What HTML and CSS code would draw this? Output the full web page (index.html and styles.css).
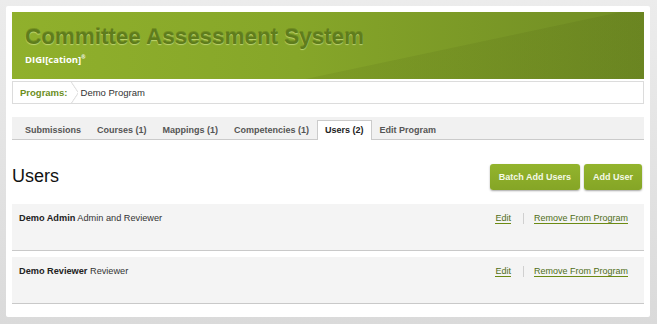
FILE: index.html
```html
<!DOCTYPE html>
<html lang="en">

<head>
    <meta charset="UTF-8">
    <meta name="viewport" content="width=device-width, initial-scale=1.0">
    <title>Committee Assessment System</title>
    <link rel="stylesheet" href="styles.css">
</head>

<body>
    <div class="panel">
        <div class="banner">
            <h1>Committee Assessment System</h1>
            <div class="brand">DIGI[cation]<sup>®</sup></div>
        </div>
        <div class="crumbs">
            <span class="crumbLabel">Programs:</span>
            <span class="crumbItem">Demo Program</span>
        </div>
        <ul class="tabs">
            <li>Submissions</li>
            <li>Courses (1)</li>
            <li>Mappings (1)</li>
            <li>Competencies (1)</li>
            <li class="active">Users (2)</li>
            <li>Edit Program</li>
        </ul>
        <div class="toolbar">
            <h2>Users</h2>
            <div class="buttons">
                <button>Batch Add Users</button>
                <button>Add User</button>
            </div>
        </div>
        <div class="userRow">
            <div><b>Demo Admin</b> Admin and Reviewer</div>
            <div class="actions">
                <a href="#">Edit</a>
                <span class="sep"></span>
                <a href="#">Remove From Program</a>
            </div>
        </div>
        <div class="userRow">
            <div><b>Demo Reviewer</b> Reviewer</div>
            <div class="actions">
                <a href="#">Edit</a>
                <span class="sep"></span>
                <a href="#">Remove From Program</a>
            </div>
        </div>
    </div>
</body>

</html>
```

FILE: styles.css
```css
body {
    margin: 0;
    background: linear-gradient(#ececec, #dadada);
    font-family: "Liberation Sans", Arial, sans-serif;
    height: 324px;
    overflow: hidden;
}

.panel {
    margin: 6px;
    width: 644px;
    height: 311px;
    padding: 6px;
    box-sizing: border-box;
    background-color: white;
    border-radius: 2px;
}

.banner {
    height: 67px;
    padding: 12px 0 0 13px;
    box-sizing: border-box;
    background:
        linear-gradient(168deg, rgba(0, 0, 0, 0) 64%, rgba(40, 50, 0, 0.08) 64.5%),
        linear-gradient(90deg, #90b02c, #86a629 45%, #708c24);
}

h1 {
    margin: 0;
    font-size: 22.4px;
    font-weight: bold;
    color: #5f7d1c;
    text-shadow: 0 1px 1px rgba(230, 245, 170, 0.55), 0 -1px 0 rgba(60, 80, 10, 0.3);
}

.brand {
    margin-top: 3px;
    font-family: "Open Sans", "Liberation Sans", sans-serif;
    font-size: 9.5px;
    font-weight: bold;
    color: white;
}

.brand sup {
    font-size: 5px;
}

.crumbs {
    margin-top: 2px;
    height: 23px;
    border: 1px solid #dcdcdc;
    box-sizing: border-box;
    display: flex;
    align-items: center;
    font-size: 9.5px;
}

.crumbLabel {
    position: relative;
    height: 100%;
    display: flex;
    align-items: center;
    padding: 0 12px 0 7px;
    font-weight: bold;
    color: #6b8e1c;
}

.crumbLabel::after {
    content: "";
    position: absolute;
    right: 2px;
    top: 0;
    height: 21px;
    width: 7px;
    background: linear-gradient(to top right, transparent 45%, #dcdcdc 50%, transparent 60%) top / 100% 50% no-repeat,
        linear-gradient(to bottom right, transparent 45%, #dcdcdc 50%, transparent 60%) bottom / 100% 50% no-repeat;
}

.crumbItem {
    padding-left: 1px;
    color: #333;
}

.tabs {
    margin: 13px 0 0 0;
    padding: 3px 0 0 5px;
    list-style-type: none;
    display: flex;
    height: 23px;
    box-sizing: border-box;
    background-color: #f1f1f1;
    border-bottom: 1px solid #cbcbcb;
}

.tabs li {
    padding: 5px 8px 0 8px;
    font-size: 9px;
    font-weight: bold;
    color: #555;
}

.tabs li.active {
    background-color: white;
    border: 1px solid #cbcbcb;
    border-bottom: none;
    margin-bottom: -1px;
    padding: 4px 7px 0 7px;
    color: #222;
}

.toolbar {
    display: flex;
    justify-content: space-between;
    align-items: center;
    margin-top: 24px;
    margin-bottom: 14px;
    height: 26px;
}

h2 {
    margin: 0 0 2px 0;
    font-size: 18px;
    font-weight: normal;
    color: #111;
}

.buttons {
    display: flex;
    gap: 4px;
    margin-right: 2px;
}

button {
    height: 26px;
    padding: 0 9px;
    border: none;
    border-radius: 3px;
    background: linear-gradient(#93b42d, #85a526);
    box-shadow: 0 1px 2px rgba(0, 0, 0, 0.35);
    color: #f4f9e6;
    font-family: "Liberation Sans", Arial, sans-serif;
    font-size: 9px;
    font-weight: bold;
}

.userRow {
    height: 47px;
    box-sizing: border-box;
    margin-bottom: 6px;
    padding: 9px 16px 0 7px;
    display: flex;
    justify-content: space-between;
    align-items: flex-start;
    background-color: #f4f4f4;
    border-bottom: 1px solid #c9c9c9;
    font-size: 9.2px;
    color: #333;
}

.userRow b {
    color: #222;
}

.actions {
    display: flex;
    align-items: center;
    font-size: 9px;
}

.actions a {
    color: #4f6e17;
    text-decoration: none;
    border-bottom: 1px solid #6b8a12;
}

.sep {
    width: 1px;
    height: 11px;
    background-color: #d0d0d0;
    margin: 0 10px 0 12px;
}
```
